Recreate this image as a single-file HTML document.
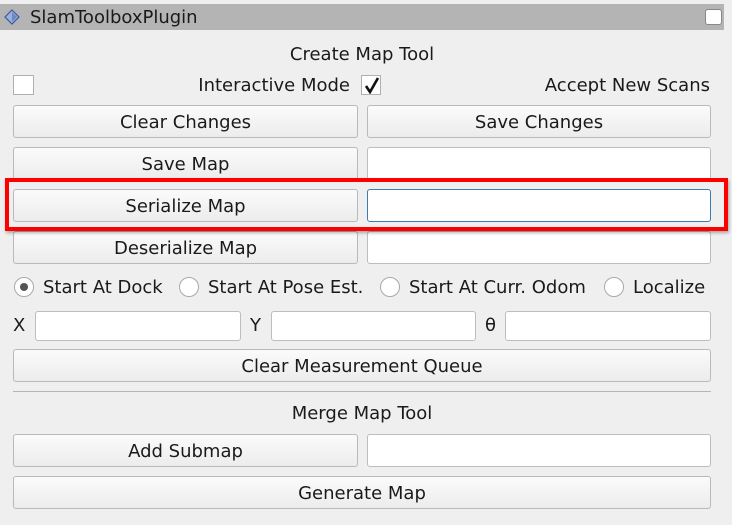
<!DOCTYPE html>
<html><head><style>
body{margin:0;width:732px;height:525px;background:#efefef;font-family:"DejaVu Sans","Liberation Sans",sans-serif;font-size:18px;color:#1a1a1a;position:relative;overflow:hidden}
div{position:absolute;box-sizing:border-box}
.b{border:1px solid #b9b9b9;border-radius:3px;background:linear-gradient(#fbfbfb,#ececec);text-align:center;line-height:33px}
.f{border:1px solid #bdbdbd;border-radius:3px;background:#fff}
.t{white-space:nowrap;line-height:20px}
.r{width:20px;height:20px;border:1px solid #a9a9a9;border-radius:50%;background:#fff}
</style></head><body>
<div style="left:0;top:4px;width:724px;height:26px;background:#b4b4b4"></div>
<svg style="position:absolute;left:4px;top:9px" width="16" height="16"><path d="M8 1 L15 8 L8 15 L1 8Z" fill="#9ab0dd" stroke="#3b5a9a" stroke-width="1.2"/><path d="M8 3 L13 8 L8 13Z" fill="#6d87c4"/></svg>
<div class="t" style="left:30px;top:8px">SlamToolboxPlugin</div>
<div style="left:705px;top:9px;width:17px;height:16px;background:#fff;border:1px solid #888;border-radius:3px"></div>
<div class="t" style="left:0;width:724px;text-align:center;top:45px">Create Map Tool</div>
<div style="left:13px;top:75px;width:21px;height:20px;background:#fff;border:1px solid #b0b0b0"></div>
<div class="t" style="left:140px;width:210px;text-align:right;top:76px">Interactive Mode</div>
<div style="left:361px;top:75px;width:20px;height:20px;background:#fff;border:1px solid #b0b0b0"><svg style="position:absolute;left:2px;top:1px" width="16" height="17"><path d="M2 9 L6 15 L14 1" fill="none" stroke="#111" stroke-width="2.6"/></svg></div>
<div class="t" style="left:480px;width:230px;text-align:right;top:76px">Accept New Scans</div>
<div class="b" style="left:13px;top:105px;width:345px;height:33px">Clear Changes</div>
<div class="b" style="left:367px;top:105px;width:344px;height:33px">Save Changes</div>
<div class="b" style="left:13px;top:147px;width:345px;height:33px">Save Map</div>
<div class="f" style="left:367px;top:147px;width:344px;height:33px"></div>
<div class="b" style="left:13px;top:189px;width:345px;height:33px">Serialize Map</div>
<div class="f" style="left:367px;top:189px;width:344px;height:33px;border-color:#3d7cb0"></div>
<div class="b" style="left:13px;top:231px;width:345px;height:33px">Deserialize Map</div>
<div class="f" style="left:367px;top:231px;width:344px;height:33px"></div>
<div style="left:5px;top:178px;width:723px;height:53px;border:4px solid #f00;box-shadow:1px 2px 3px rgba(0,0,0,.3)"></div>
<div class="r" style="left:14px;top:277px"><div style="left:5px;top:5px;width:8px;height:8px;border-radius:50%;background:#555"></div></div>
<div class="t" style="left:43px;top:278px">Start At Dock</div>
<div class="r" style="left:179px;top:277px"></div>
<div class="t" style="left:208px;top:278px">Start At Pose Est.</div>
<div class="r" style="left:380px;top:277px"></div>
<div class="t" style="left:409px;top:278px">Start At Curr. Odom</div>
<div class="r" style="left:604px;top:277px"></div>
<div class="t" style="left:633px;top:278px">Localize</div>
<div class="t" style="left:13px;top:316px">X</div>
<div class="f" style="left:35px;top:311px;width:206px;height:30px"></div>
<div class="t" style="left:250px;top:316px">Y</div>
<div class="f" style="left:271px;top:311px;width:205px;height:30px"></div>
<div class="t" style="left:485px;top:316px">θ</div>
<div class="f" style="left:505px;top:311px;width:206px;height:30px"></div>
<div class="b" style="left:13px;top:349px;width:698px;height:33px">Clear Measurement Queue</div>
<div style="left:13px;top:391px;width:698px;height:1px;background:#b5b5b5"></div>
<div class="t" style="left:0;width:724px;text-align:center;top:404px">Merge Map Tool</div>
<div class="b" style="left:13px;top:434px;width:345px;height:33px">Add Submap</div>
<div class="f" style="left:367px;top:434px;width:344px;height:33px"></div>
<div class="b" style="left:13px;top:476px;width:698px;height:33px">Generate Map</div>
</body></html>
